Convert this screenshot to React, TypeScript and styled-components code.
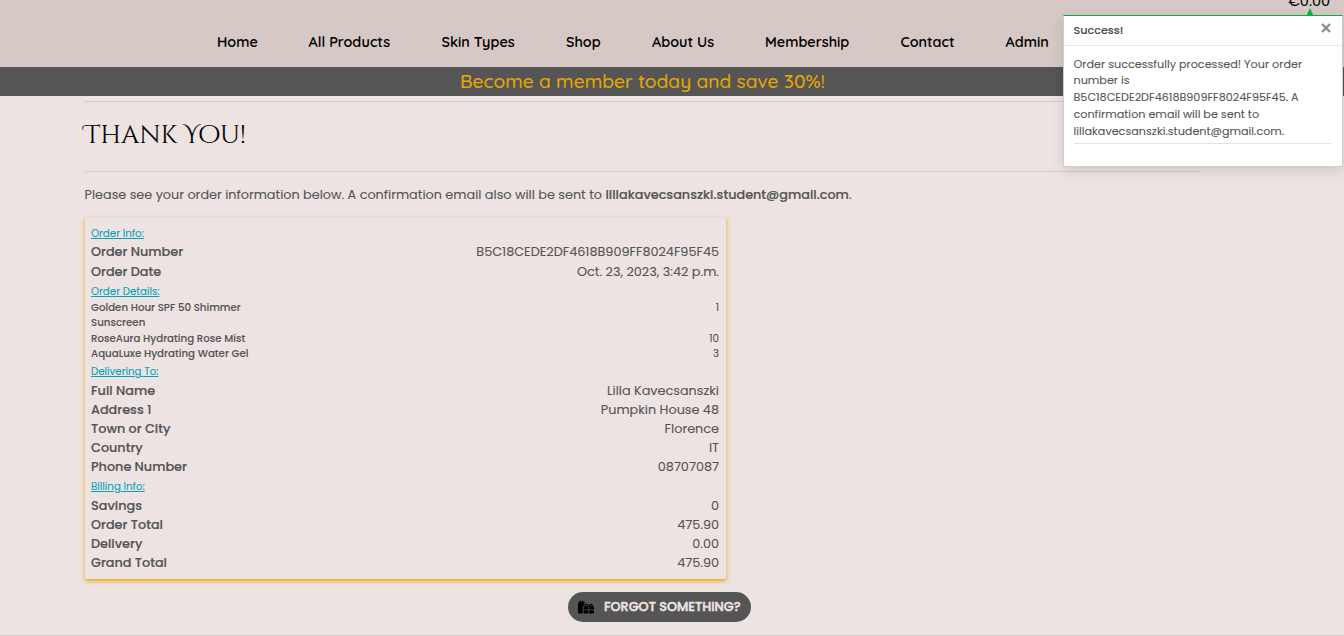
import React from "react";
import styled, { createGlobalStyle } from "styled-components";
import { FaGifts } from "react-icons/fa";

const Global = createGlobalStyle`
  *, *::before, *::after { box-sizing: border-box; }
  html, body { margin: 0; padding: 0; }
  body {
    height: 636px;
    overflow: hidden;
    background: #ece3e2;
    color: #555;
    font-family: Poppins, Inter, "Open Sans", sans-serif;
    font-size: 12.8px;
    -webkit-text-stroke: 0.1px currentColor;
  }
`;

const Page = styled.div`
  position: relative;
  height: 636px;
  overflow: hidden;
  display: flex;
  flex-direction: column;
  border-bottom: 1px solid #cfc9c9;
`;

const Header = styled.header`
  height: 67px;
  flex: none;
  padding: 17px 0 0 217px;
  background: #d6c9c5;
`;

const Nav = styled.nav`
  display: flex;
  height: 50px;
  align-items: center;
`;

const NavLink = styled.a<{ $w: number }>`
  flex: none;
  width: ${(p) => p.$w}px;
  color: #000;
  font-family: Quicksand, Lato, sans-serif;
  font-size: 14.4px;
  font-weight: 600;
  white-space: nowrap;
`;

const Bag = styled.span`
  position: absolute;
  top: -8px;
  right: 14px;
  color: #000;
  font-size: 14.4px;
  line-height: 18px;
`;

const Banner = styled.div`
  flex: none;
  height: 29px;
  padding-left: 460px;
  background: #555;
  color: #e6a800;
  font-family: Quicksand, Lato, sans-serif;
  font-size: 19.2px;
  font-weight: 500;
  line-height: 29px;
  white-space: nowrap;
`;

const Main = styled.main`
  width: 1116px;
  margin-left: 85px;
  padding-top: 5px;
`;

const Rule = styled.hr`
  height: 1px;
  margin: 0;
  border: 0;
  background: #d1cbca;
`;

const Title = styled.h1`
  height: 69px;
  margin: 0 0 0 -0.5px;
  color: #000;
  font-family: "Cinzel Decorative", "Liberation Serif", serif;
  font-size: 25.6px;
  font-weight: 400;
  line-height: 68px;
`;

const Intro = styled.p`
  margin: 13px 0 12px -0.5px;
  height: 20px;
  line-height: 20px;
  white-space: nowrap;
`;

const Email = styled.strong`
  font-weight: 500;
  -webkit-text-stroke: 0.18px currentColor;
`;

const Card = styled.section`
  width: 641px;
  height: 362px;
  padding: 7px 7px 0 6px;
  border-radius: 1px;
  box-shadow: 0 2px 4px #e6a800;
`;

const Heading = styled.div<{ $shift?: number }>`
  height: 18px;
  margin-top: ${(p) => -(p.$shift ?? 0)}px;
  margin-bottom: ${(p) => p.$shift ?? 0}px;
  color: #05a3ba;
  font-size: 10.24px;
  line-height: 20px;
  text-decoration: underline;
`;

const Group = styled.div<{ $pitch?: number; $gap?: number }>`
  display: grid;
  grid-auto-rows: minmax(${(p) => p.$pitch ?? 19}px, auto);
  row-gap: ${(p) => p.$gap ?? 0}px;
  margin-bottom: 1px;
`;

const Billing = styled(Group)`
  padding-top: 1px;
`;

const Row = styled.div`
  display: flex;
  justify-content: space-between;
  line-height: 19px;
`;

const Label = styled.span`
  font-weight: 500;
  -webkit-text-stroke: 0.18px currentColor;
`;

const Item = styled.div`
  display: flex;
  justify-content: space-between;
  font-size: 10.24px;
  line-height: 15.4px;
`;

const ItemName = styled.span`
  width: 160px;
  font-weight: 500;
`;

const ShopButton = styled.button`
  display: flex;
  align-items: center;
  width: 183px;
  height: 30px;
  margin: 13px 0 0 483px;
  padding: 0 10px;
  gap: 10px;
  border: 0;
  border-radius: 15px;
  background: #555;
  color: #ece3e2;
  font: 500 12.8px Poppins, Inter, sans-serif;
  -webkit-text-stroke: 0.5px currentColor;
  white-space: nowrap;

  svg { flex: none; color: #000; }
`;

const Toast = styled.aside`
  position: absolute;
  top: 15px;
  left: 1063px;
  width: 280px;
  height: 152px;
  border: 1px solid #d0cbca;
  border-top-color: #02b340;
  background: #fff;
  box-shadow: 0 4px 12px rgba(0, 0, 0, 0.12);
`;

const Arrow = styled.svg`
  position: absolute;
  top: -8px;
  right: 28px;
`;

const ToastHeader = styled.div`
  display: flex;
  justify-content: space-between;
  height: 30px;
  padding: 0 11px 0 9.5px;
  border-bottom: 1px solid #e8e8e8;
  color: #444a50;
  font-size: 11.2px;
  font-weight: 500;
  line-height: 29px;

  svg { margin-top: 7px; }
`;

const ToastBody = styled.div`
  margin: 0 10px 0 9.5px;
  padding-top: 9.6px;
  height: 98px;
  border-bottom: 1px solid #e3e3e3;
  font-size: 11.2px;
  line-height: 16.8px;
`;

const ToastLine = styled.div`
  white-space: nowrap;
`;

type Entry = [string, string];

const links: [string, number][] = [
  ["Home", 91.5],
  ["All Products", 133],
  ["Skin Types", 124.5],
  ["Shop", 86],
  ["About Us", 113],
  ["Membership", 135.5],
  ["Contact", 105],
  ["Admin", 50],
];

const info: Entry[] = [
  ["Order Number", "B5C18CEDE2DF4618B909FF8024F95F45"],
  ["Order Date", "Oct. 23, 2023, 3:42 p.m."],
];

const items: Entry[] = [
  ["Golden Hour SPF 50 Shimmer Sunscreen", "1"],
  ["RoseAura Hydrating Rose Mist", "10"],
  ["AquaLuxe Hydrating Water Gel", "3"],
];

const delivery: Entry[] = [
  ["Full Name", "Lilla Kavecsanszki"],
  ["Address 1", "Pumpkin House 48"],
  ["Town or City", "Florence"],
  ["Country", "IT"],
  ["Phone Number", "08707087"],
];

const billing: Entry[] = [
  ["Savings", "0"],
  ["Order Total", "475.90"],
  ["Delivery", "0.00"],
  ["Grand Total", "475.90"],
];

const Rows = ({ entries }: { entries: Entry[] }) => (
  <>
    {entries.map(([label, value]) => (
      <Row key={label}>
        <Label>{label}</Label>
        <span>{value}</span>
      </Row>
    ))}
  </>
);

export default function App() {
  return (
    <Page>
      <Global />
      <Header>
        <Nav>
          {links.map(([text, w]) => (
            <NavLink key={text} $w={w}>{text}</NavLink>
          ))}
        </Nav>
        <Bag>€0.00</Bag>
      </Header>
      <Banner>Become a member today and save 30%!</Banner>
      <Main>
        <Rule />
        <Title>Thank You!</Title>
        <Rule />
        <Intro>
          Please see your order information below. A confirmation email also will be sent to{" "}
          <Email>lillakavecsanszki.student@gmail.com</Email>.
        </Intro>
        <Card>
          <Heading>Order Info:</Heading>
          <Group $gap={1}><Rows entries={info} /></Group>
          <Heading>Order Details:</Heading>
          <Group $pitch={15}>
            {items.map(([name, qty]) => (
              <Item key={name}>
                <ItemName>{name}</ItemName>
                <span>{qty}</span>
              </Item>
            ))}
          </Group>
          <Heading $shift={0.6}>Delivering To:</Heading>
          <Group><Rows entries={delivery} /></Group>
          <Heading>Billing Info:</Heading>
          <Billing><Rows entries={billing} /></Billing>
        </Card>
        <ShopButton>
          <FaGifts size={16} />
          FORGOT SOMETHING?
        </ShopButton>
      </Main>
      <Toast>
        <Arrow width="8" height="8" viewBox="0 0 8 8"><path d="M4 0 7.5 8H.5z" fill="#02b340" /></Arrow>
        <ToastHeader>
          Success!
          <svg width="10" height="10" viewBox="0 0 10 10" stroke="#8d8f92" strokeWidth="2.4">
            <path d="m1 1 8 8M9 1 1 9" />
          </svg>
        </ToastHeader>
        <ToastBody>
          <ToastLine>Order successfully processed! Your order</ToastLine>
          <ToastLine>number is</ToastLine>
          <ToastLine>B5C18CEDE2DF4618B909FF8024F95F45. A</ToastLine>
          <ToastLine>confirmation email will be sent to</ToastLine>
          <ToastLine>lillakavecsanszki.student@gmail.com.</ToastLine>
        </ToastBody>
      </Toast>
    </Page>
  );
}
